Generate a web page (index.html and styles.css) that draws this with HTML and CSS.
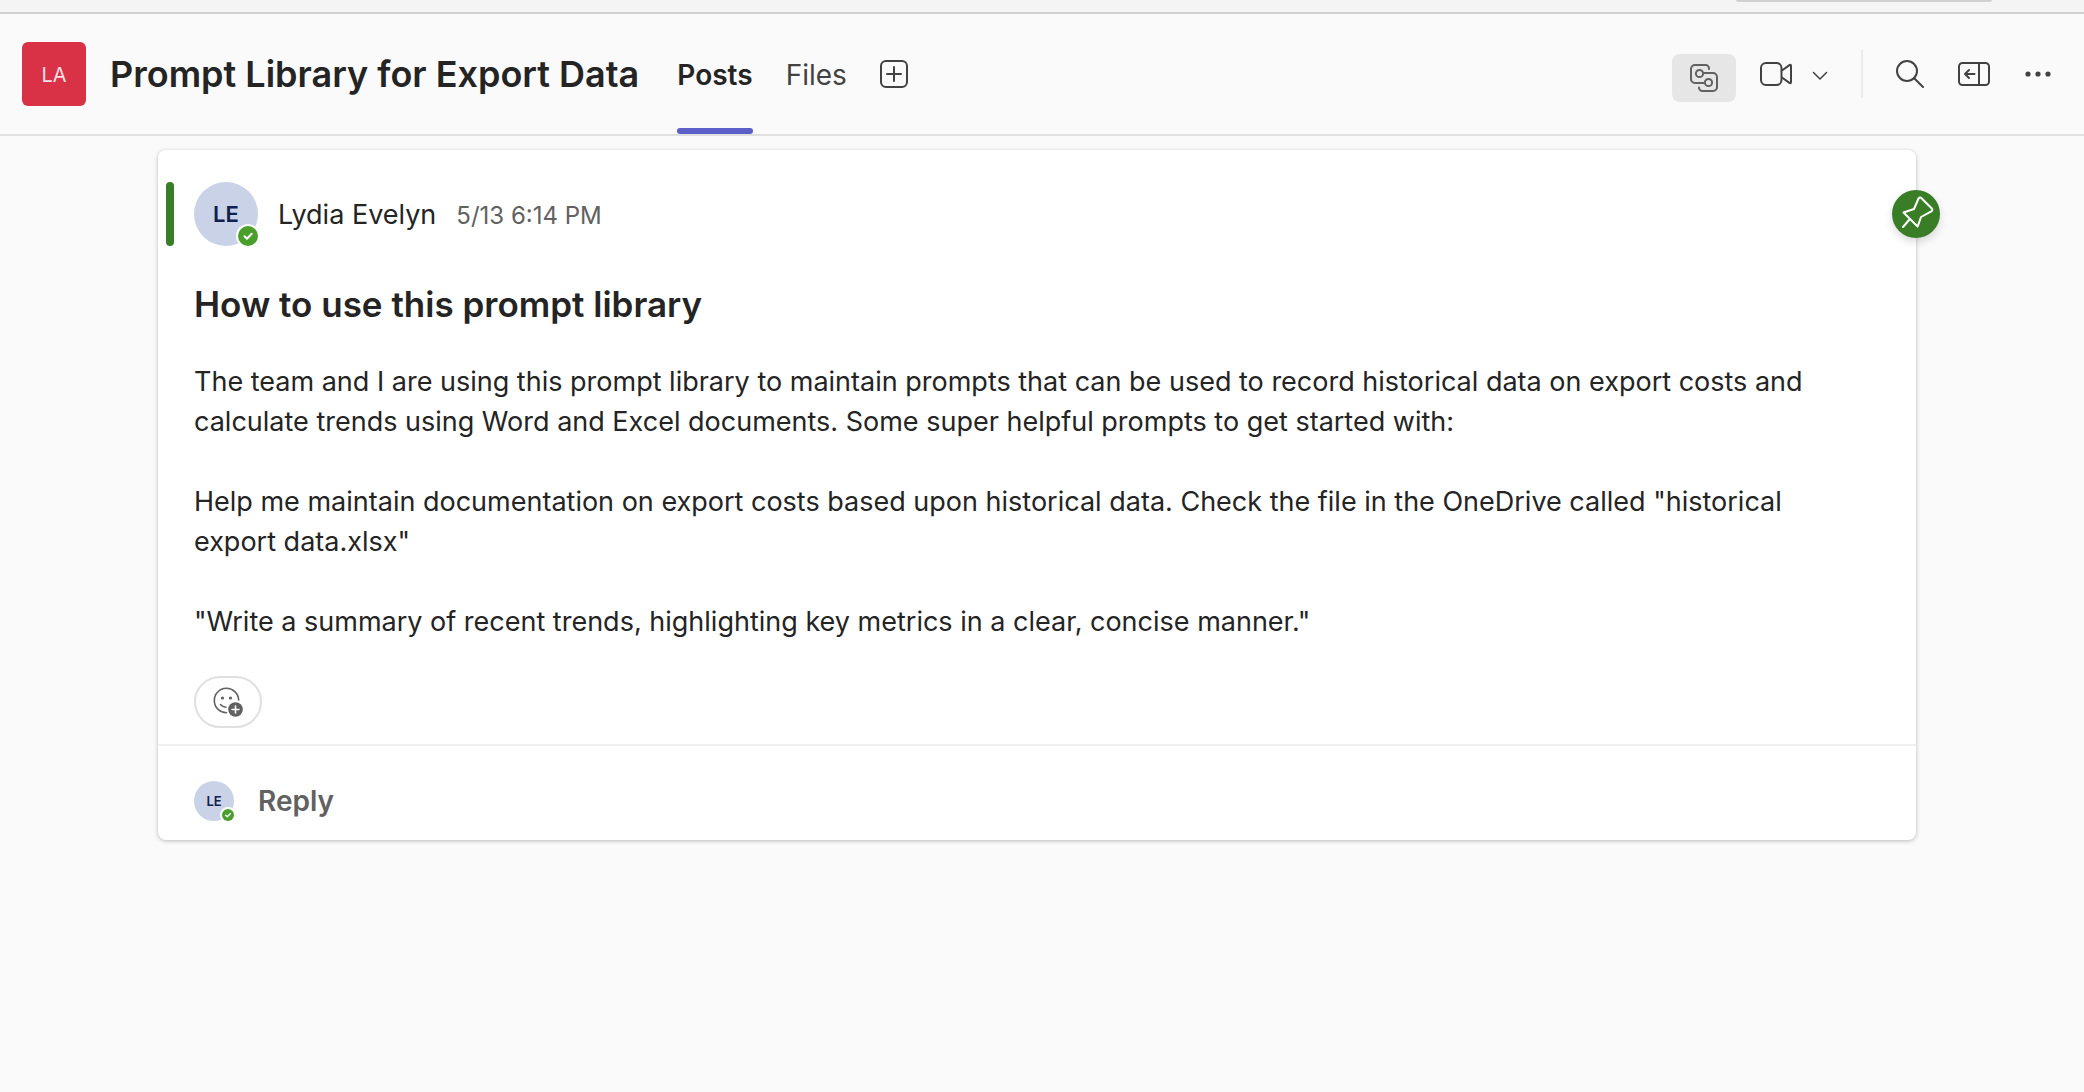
FILE: index.html
```html
<!DOCTYPE html>
<html lang="en">
<head>
<meta charset="utf-8">
<meta name="viewport" content="width=device-width, initial-scale=1">
<title>Prompt Library for Export Data</title>
<link rel="stylesheet" href="styles.css">
</head>
<body>
<div class="app-strip"><div class="app-search"></div></div>
<header class="channel-header">
  <div class="team-tile">LA</div>
  <h1 class="channel-title">Prompt Library for Export Data</h1>
  <nav class="tabs">
    <a class="tab tab-active" href="#posts">Posts</a>
    <a class="tab" href="#files">Files</a>
    <button class="icon-button add-tab" type="button" aria-label="Add a tab">
      <svg width="28" height="28" viewBox="0 0 28 28" fill="none" stroke="currentColor" stroke-width="2" stroke-linecap="round"><rect x="1" y="1" width="26" height="26" rx="5"/><path d="M14 7v14M7 14h14"/></svg>
    </button>
  </nav>
  <div class="actions">
    <button class="icon-button loop-button" type="button" aria-label="Workflows">
      <svg width="28" height="28" viewBox="0 0 28 28" fill="none" stroke="currentColor" stroke-width="2" stroke-linecap="round"><path d="M19 5v-.5A3.500 3.500 0 0 0 15.500 1H5a4 4 0 0 0-4 4v10a4 4 0 0 0 4 4h9.500"/><circle cx="9.500" cy="9.500" r="3.600"/><path d="M13.500 9H23a4 4 0 0 1 4 4v10a4 4 0 0 1-4 4H12.500A3.500 3.500 0 0 1 9 23.500"/><circle cx="18.500" cy="18.500" r="3.600"/></svg>
    </button>
    <button class="icon-button meet-button" type="button" aria-label="Meet">
      <svg width="32" height="24" viewBox="0 0 32 24" fill="none" stroke="currentColor" stroke-width="2" stroke-linejoin="round"><rect x="1" y="1" width="20.500" height="22" rx="5"/><path d="M22 8.500l7.400-5.400q1.600-.8 1.600.9v16q0 1.700-1.600.9L22 15.500"/></svg>
    </button>
    <button class="icon-button chevron-button" type="button" aria-label="Meeting options">
      <svg width="16" height="10" viewBox="0 0 16 10" fill="none" stroke="currentColor" stroke-width="1.500" stroke-linecap="round" stroke-linejoin="round"><path d="M1.500 1.500L8 8l6.500-6.500"/></svg>
    </button>
    <span class="separator"></span>
    <button class="icon-button search-button" type="button" aria-label="Search">
      <svg width="28" height="28" viewBox="0 0 28 28" fill="none" stroke="currentColor" stroke-width="2" stroke-linecap="round"><circle cx="11" cy="11" r="10"/><path d="M18.200 18.200L27 27"/></svg>
    </button>
    <button class="icon-button pane-button" type="button" aria-label="Open pane">
      <svg width="32" height="24" viewBox="0 0 32 24" fill="none" stroke="currentColor" stroke-width="2" stroke-linecap="round" stroke-linejoin="round"><rect x="1" y="1" width="30" height="22" rx="3.500"/><path d="M21 1v22M16.500 12H7.500M11 8l-4 4 4 4"/></svg>
    </button>
    <button class="icon-button more-button" type="button" aria-label="More options">
      <svg width="26" height="6" viewBox="0 0 26 6" fill="currentColor"><circle cx="3" cy="3" r="2.600"/><circle cx="13" cy="3" r="2.600"/><circle cx="23" cy="3" r="2.600"/></svg>
    </button>
  </div>
</header>
<main class="posts">
  <article class="post">
    <div class="pin">
      <svg width="48" height="48" viewBox="0 0 48 48" fill="none" stroke="#fff" stroke-width="2" stroke-linecap="round" stroke-linejoin="round"><path d="M26.500 8.500Q28 6.800 29.500 8.300L39.800 18.500Q41.200 20 39.300 21.300L29 27Q27 33 25.600 36.500L11.500 22.500L22 19ZM17.500 29.500L11 37"/></svg>
    </div>
    <div class="post-content">
      <div class="post-head">
        <span class="marker"></span>
        <div class="avatar">LE
          <svg class="presence" viewBox="0 0 24 24"><circle cx="12" cy="12" r="12" fill="#fff"/><circle cx="12" cy="12" r="10" fill="#4a9f2c"/><path d="M8.500 12.300l2.500 2.400 4.700-5" fill="none" stroke="#fff" stroke-width="2" stroke-linecap="round" stroke-linejoin="round"/></svg>
        </div>
        <div class="byline">
          <span class="author">Lydia Evelyn</span>
          <time class="timestamp">5/13 6:14 PM</time>
        </div>
      </div>
      <h2 class="post-title">How to use this prompt library</h2>
      <div class="post-body">
        <p>The team and I are using this prompt library to maintain prompts that can be used to record historical data on export costs and calculate trends using Word and Excel documents. Some super helpful prompts to get started with:</p>
        <p>Help me maintain documentation on export costs based upon historical data. Check the file in the OneDrive called "historical export data.xlsx"</p>
        <p>"Write a summary of recent trends, highlighting key metrics in a clear, concise manner."</p>
      </div>
      <button class="reaction" type="button" aria-label="Add reaction">
        <svg width="30" height="30" viewBox="0 0 30 30" fill="none" stroke="currentColor" stroke-width="1.600" stroke-linecap="round"><path d="M25.700 13A12.200 12.200 0 1 0 13.500 25.700"/><path d="M7.500 17.500a8 8 0 0 0 5.500 2.800"/><circle cx="9.500" cy="11" r="1.600" fill="currentColor" stroke="none"/><circle cx="17.500" cy="11" r="1.600" fill="currentColor" stroke="none"/><circle cx="22.500" cy="22.500" r="7.300" fill="currentColor" stroke="none"/><path d="M22.500 19v7M19 22.500h7" stroke="#fff"/></svg>
      </button>
    </div>
    <div class="reply-row">
      <div class="avatar avatar-small">LE
        <svg class="presence" viewBox="0 0 24 24"><circle cx="12" cy="12" r="12" fill="#fff"/><circle cx="12" cy="12" r="9" fill="#4a9f2c"/><path d="M8.500 12.300l2.500 2.400 4.700-5" fill="none" stroke="#fff" stroke-width="2" stroke-linecap="round" stroke-linejoin="round"/></svg>
      </div>
      <button class="reply" type="button">Reply</button>
    </div>
  </article>
</main>
</body>
</html>
```
FILE: styles.css
```css
* { box-sizing: border-box; }

body {
  margin: 0;
  min-height: 100vh;
  background: #fafafa;
  color: #242424;
  font-family: Inter, "Liberation Sans", sans-serif;
  font-size: 28px;
  line-height: 40px;
}

h1, h2, p { margin: 0; }

button {
  padding: 0;
  border: 0;
  background: none;
  color: inherit;
  font: inherit;
}

svg { display: block; }

.app-strip {
  display: flex;
  justify-content: flex-end;
  height: 14px;
  padding-right: 92px;
  border-bottom: 2px solid #d1d1d1;
  background: #f4f4f4;
}

.app-search {
  width: 256px;
  height: 2px;
  border-radius: 0 0 4px 4px;
  background: #d1d1d1;
}

.channel-header {
  display: flex;
  align-items: center;
  height: 122px;
  padding: 0 32px 0 22px;
  border-bottom: 2px solid #e0e0e0;
}

.team-tile {
  display: flex;
  align-items: center;
  justify-content: center;
  width: 64px;
  height: 64px;
  border-radius: 6px;
  padding-top: 2px;
  background: #d93246;
  color: #f9dfe6;
  font-size: 20px;
}

.channel-title {
  margin-left: 24px;
  font-size: 36px;
  font-weight: 600;
  white-space: nowrap;
}

.tabs {
  display: flex;
  align-items: center;
  align-self: stretch;
  gap: 33px;
  margin-left: 38px;
}

.tab {
  display: flex;
  align-items: center;
  height: 100%;
  border-top: 8px solid transparent;
  border-bottom: 6px solid transparent;
  color: #424242;
  text-decoration: none;
}

.tab-active {
  position: relative;
  color: #242424;
  font-weight: 600;
}

.tab-active::after {
  content: "";
  position: absolute;
  right: 0;
  bottom: -6px;
  left: 0;
  height: 6px;
  border-radius: 3px;
  background: #5b5fc7;
}

.icon-button {
  display: flex;
  flex: none;
  align-items: center;
  justify-content: center;
  color: #424242;
}

.actions {
  display: flex;
  align-items: center;
  margin-left: auto;
}

.loop-button {
  width: 64px;
  height: 48px;
  margin: 8px 24px 0 0;
  border-radius: 8px;
  background: #e6e6e6;
  color: #616161;
}

.chevron-button { margin: 4px 33px 0 20px; }

.separator {
  width: 2px;
  height: 48px;
  margin-right: 33px;
  background: #ebebeb;
}

.search-button { margin-right: 34px; }

.pane-button { margin-right: 35px; }

.more-button { margin-right: 1px; }

.posts { padding: 14px 168px 0 158px; }

.post {
  position: relative;
  border-radius: 8px;
  background: #fff;
  box-shadow: 0 1px 4px rgba(0, 0, 0, .26);
}

.post-content {
  padding: 32px 36px 16px;
  border-bottom: 2px solid #f0f0f0;
}

.pin {
  position: absolute;
  top: 40px;
  right: -24px;
  width: 48px;
  height: 48px;
  border-radius: 50%;
  background: #3a7d27;
  box-shadow: 0 4px 8px rgba(0, 0, 0, .14);
}

.post-head {
  display: flex;
  align-items: center;
  margin-left: -28px;
}

.marker {
  width: 8px;
  height: 64px;
  margin-right: 20px;
  border-radius: 4px;
  background: #3a7d27;
}

.avatar {
  position: relative;
  display: flex;
  flex: none;
  align-items: center;
  justify-content: center;
  width: 64px;
  height: 64px;
  border-radius: 50%;
  background: #c9d2e6;
  color: #10204f;
  font-size: 22px;
  font-weight: 600;
}

.presence {
  position: absolute;
  right: -2px;
  bottom: -2px;
  width: 24px;
  height: 24px;
}

.byline {
  display: flex;
  align-items: baseline;
  gap: 20px;
  margin-left: 20px;
  padding-top: 2px;
}

.author { font-size: 27px; }

.timestamp {
  color: #616161;
  font-size: 24px;
}

.post-title {
  margin-top: 34px;
  font-size: 35px;
  font-weight: 600;
  line-height: 48px;
}

.post-body {
  display: grid;
  gap: 40px;
  margin-top: 34px;
  padding-right: 24px;
  font-size: 27px;
}

.reaction {
  display: flex;
  align-items: center;
  justify-content: center;
  width: 68px;
  height: 52px;
  margin-top: 34px;
  border: 2px solid #e0e0e0;
  border-radius: 26px;
  color: #616161;
}

.reply-row {
  display: flex;
  align-items: center;
  padding: 35px 36px 19px;
}

.avatar-small {
  width: 40px;
  height: 40px;
  font-size: 13px;
}

.avatar-small .presence {
  width: 16px;
  height: 16px;
}

.reply {
  margin-left: 24px;
  color: #616161;
  font-weight: 600;
}
```
